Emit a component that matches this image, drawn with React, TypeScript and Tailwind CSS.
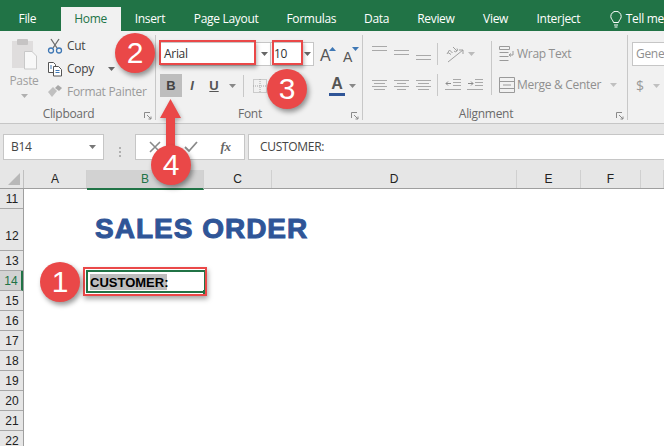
import React from "react";

const UI = "font-['Open_Sans','Noto_Sans',sans-serif] tracking-[-0.3px]";

const Chev = ({ c = "#7a7a7a", className = "" }: { c?: string; className?: string }) => (
  <svg width="7" height="4" viewBox="0 0 7 4" className={className}><path d="M0 0h7L3.5 4z" fill={c} /></svg>
);

const Launcher = () => (
  <svg width="8" height="8" viewBox="0 0 8 8" className="mr-[3px]" fill="none" stroke="#8a8a8a">
    <path d="M.5 6V.5H6" /><path d="M3 3l4 4M7 4.5V7H4.5" />
  </svg>
);

const Lines = ({ widths, gap = 4, c = "#a9a9a9" }: { widths: number[]; gap?: number; c?: string }) => (
  <svg width="15" height={(widths.length - 1) * gap + 1} fill="none" stroke={c}>
    {widths.map((w, i) => (
      <path key={i} d={`M${(15 - w) / 2} ${i * gap + 0.5}h${w}`} />
    ))}
  </svg>
);

const Tab = ({ w, label, active }: { w: string; label: string; active?: boolean }) => (
  <div className={`${w} h-[24px] flex items-center justify-center whitespace-nowrap ${active ? "bg-[#f1f1f1] text-[#217346]" : "text-white"}`}>
    {label}
  </div>
);

const Group = ({ w, label, children, sep = true }: { w: string; label: string; children: React.ReactNode; sep?: boolean }) => (
  <div className={`${w} shrink-0 mt-[4px] mb-[3px] flex flex-col ${sep ? "border-r border-[#c8c8c8]" : ""}`}>
    <div className="flex-1 min-h-0">{children}</div>
    <div className="h-[17px] flex items-end justify-end relative">
      <div className="absolute inset-0 flex items-center justify-center text-[12px] leading-none text-[#6a6a6a] pt-[5px] pr-[18px]">{label}</div>
      {sep && <Launcher />}
    </div>
  </div>
);

const Clipboard = () => (
  <Group w="w-[156px]" label="Clipboard">
    <div className="flex h-full pl-[9px] pt-[3px]">
      <div className="w-[30px] flex flex-col items-center">
        <svg width="27" height="33" viewBox="0 0 27 33">
          <rect x="1" y="3" width="21" height="27" fill="#dfdddd" />
          <rect x="6" y="1" width="11" height="6" rx="1" fill="#c6c4c4" />
          <path d="M13.5 13.5H21l4.5 4.500v13h-12z" fill="#f8f8f8" stroke="#c9c9c9" />
        </svg>
        <div className="text-[12px] leading-none text-[#a0a0a0] mt-[4px]">Paste</div>
        <Chev c="#b0b0b0" className="mt-[7px]" />
      </div>
      <div className="ml-[8px] flex flex-col gap-[3px] -mt-[2px]">
        <div className="h-[20px] flex items-center gap-[4px] text-[12px] text-[#444]">
          <svg width="16" height="16" viewBox="0 0 16 16" fill="none">
            <path d="M4 1l6 9M12 1L6 10" stroke="#6b6b6b" strokeWidth="1.3" />
            <circle cx="4" cy="12.500" r="2.500" stroke="#3f78b5" strokeWidth="1.3" />
            <circle cx="12" cy="12.500" r="2.500" stroke="#3f78b5" strokeWidth="1.3" />
          </svg>
          <span>Cut</span>
        </div>
        <div className="h-[20px] flex items-center gap-[4px] text-[12px] text-[#444]">
          <svg width="16" height="16" viewBox="0 0 16 16" fill="none" stroke="#555">
            <path d="M1.500 1.500h5l2 2v8h-7z" fill="#fff" />
            <path d="M6.500 5.500h5l3 3v6.500h-8z" fill="#fff" />
            <path d="M8.500 9.500h4M8.500 11.500h4M3 5h2M3 7h2" stroke="#3f78b5" />
          </svg>
          <span>Copy</span>
          <Chev c="#666" className="ml-[10px]" />
        </div>
        <div className="h-[20px] flex items-center gap-[4px] text-[12px] text-[#9a9a9a] whitespace-nowrap">
          <svg width="16" height="16" viewBox="0 0 16 16">
            <path d="M1 8l5-5 4 4-5 6z" fill="#c0c0c0" />
            <path d="M8 4l3-3 4 3-3 3z" fill="#a8a8a8" />
          </svg>
          <span>Format Painter</span>
        </div>
      </div>
    </div>
  </Group>
);

const ComboArrow = () => (
  <div className="flex-1 flex items-center justify-center"><Chev c="#666" /></div>
);

const Font = () => (
  <Group w="w-[207px]" label="Font">
    <div className="pl-[4px] pt-[7px]">
      <div className="flex items-center h-[24px]">
        <div className="w-[111px] h-[24px] bg-white border border-[#c6c6c6] flex text-[12px] text-[#333]">
          <div className="w-[97px] pl-[3px] flex items-center">Arial</div>
          <ComboArrow />
        </div>
        <div className="w-[43px] h-[24px] bg-white border border-l-0 border-[#c6c6c6] flex text-[12px] text-[#333]">
          <div className="w-[30px] pl-[3px] flex items-center">10</div>
          <ComboArrow />
        </div>
        <div className="ml-[6px] flex gap-[7px] font-['Liberation_Sans',sans-serif] text-[#555]">
          <div className="relative w-[16px] text-[16px] leading-none pt-[3px]">A<svg className="absolute right-0 top-[2px]" width="7" height="4"><path d="M0 4L3.500 0 7 4z" fill="#3f78b5" /></svg></div>
          <div className="relative w-[16px] text-[14px] leading-none pt-[5px]">A<svg className="absolute right-0 top-[2px]" width="7" height="4"><path d="M0 0h7L3.500 4z" fill="#3f78b5" /></svg></div>
        </div>
      </div>
      <div className="flex items-center h-[23px] mt-[8px] font-['Liberation_Sans',sans-serif] tracking-normal text-[13px] text-[#555]">
        <div className="w-[22px] h-[23px] bg-[#bdbdbd] flex items-center justify-center font-bold text-[#444]">B</div>
        <div className="w-[20px] text-center italic font-bold">I</div>
        <div className="w-[22px] ml-[1px] text-center font-bold underline">U</div>
        <Chev c="#888" className="ml-[4px]" />
        <div className="w-px h-[22px] bg-[#c8c8c8] ml-[7px]" />
        <svg width="14" height="14" className="ml-[9px]" fill="none" stroke="#a5a5a5" strokeDasharray="1 1"><rect x="0.500" y="0.500" width="13" height="13" /><path d="M7 0v14M0 7h14" /></svg>
        <div className="ml-[61px] w-[18px] flex flex-col items-center text-[16px] font-bold leading-none text-[#555]">A<div className="w-[16px] h-[3px] bg-[#2f5597] mt-[1px]" /></div>
        <Chev c="#888" className="ml-[3px]" />
      </div>
    </div>
  </Group>
);

const Alignment = () => (
  <Group w="w-[265px]" label="Alignment">
    <div className="flex pl-[9px] pt-[6px] text-[12px] text-[#8f8f8f] whitespace-nowrap">
      <div className="w-[119px] shrink-0 pt-[1px]">
        <div className="flex items-center h-[23px]">
          <div className="flex gap-[7px] h-[22px] w-[59px]">
            <div className="pt-[3px]"><Lines widths={[15, 15]} /></div>
            <div className="pt-[7px]"><Lines widths={[15, 15]} /></div>
            <div className="pt-[12px]"><Lines widths={[15, 15]} /></div>
          </div>
          <div className="w-px h-[22px] bg-[#c8c8c8] ml-[6px]" />
          <svg width="20" height="18" viewBox="0 0 20 18" className="ml-[7px]" fill="none" stroke="#9f9f9f">
            <path d="M3 17L18 5M18 5h-4M18 5v4" />
            <path d="M2 9l2.500-4 3 3M3 7.500l3 2M8 2l4 4M9 6a1.800 1.800 0 103-2.500" />
          </svg>
          <Chev c="#bbb" className="ml-[3px]" />
        </div>
        <div className="flex items-center h-[23px] mt-[8px]">
          <div className="flex gap-[7px] w-[59px]">
            <Lines widths={[15, 11, 15, 11]} gap={3} />
            <Lines widths={[15, 9, 15, 9]} gap={3} />
            <Lines widths={[15, 11, 15, 11]} gap={3} />
          </div>
          <div className="w-px h-[22px] bg-[#c8c8c8] ml-[6px]" />
          <div className="flex gap-[6px] ml-[7px]">
            <svg width="16" height="11" fill="none" stroke="#a9a9a9">
              <path d="M8 .5h8M8 3.500h8M8 6.500h8M0 10.500h16" />
              <path d="M6 4.500H1M3 2.500l-2 2 2 2" stroke="#8a8a8a" />
            </svg>
            <svg width="16" height="11" fill="none" stroke="#a9a9a9">
              <path d="M8 .5h8M8 3.500h8M8 6.500h8M0 10.500h16" />
              <path d="M1 4.500h5M4 2.500l2 2-2 2" stroke="#8a8a8a" />
            </svg>
          </div>
        </div>
      </div>
      <div className="w-px h-[54px] bg-[#c8c8c8]" />
      <div className="pl-[7px] pt-[1px]">
        <div className="flex items-center h-[23px]">
          <svg width="16" height="16" viewBox="0 0 16 16" fill="none" stroke="#9a9a9a">
            <path d="M.5.500h10v3H.5zM.5 6.500h9M.5 10.500h9M.5 14.500h9M14 5v4h-4M12 7.500l-2 1.500 2 1.500" />
          </svg>
          <span className="ml-[2px]">Wrap Text</span>
        </div>
        <div className="flex items-center h-[23px] mt-[8px]">
          <svg width="16" height="16" viewBox="0 0 16 16" fill="none" stroke="#9a9a9a">
            <path d="M.5.500h15v15H.5zM.5 4.500h15M.5 11.500h15M4 8h8" />
          </svg>
          <span className="ml-[2px]">Merge &amp; Center</span>
          <Chev c="#c0c0c0" className="ml-[9px]" />
        </div>
      </div>
    </div>
  </Group>
);

const NumberGroup = () => (
  <Group w="w-[37px]" label="" sep={false}>
    <div className="pl-[4px] pt-[7px]">
      <div className="h-[24px] bg-white border-y border-l border-[#c6c6c6] pl-[3px] flex items-center text-[12px] text-[#8f8f8f] overflow-hidden">Gener</div>
      <div className="flex items-center h-[23px] mt-[8px] text-[14px] text-[#9a9a9a] pl-[4px] gap-[9px]">
        $<Chev c="#c0c0c0" />
      </div>
    </div>
  </Group>
);

const columns = [
  { n: "A", w: "w-[63px]" },
  { n: "B", w: "w-[117px]", sel: true },
  { n: "C", w: "w-[68px]" },
  { n: "D", w: "w-[245px]" },
  { n: "E", w: "w-[64px]" },
  { n: "F", w: "w-[60px]" },
  { n: "", w: "w-[23px]" },
];

const rows = [
  { n: 11, h: "h-[20px] pb-[3px]" },
  { n: 12, h: "h-[42px] pb-[8px]" },
  { n: 13, h: "h-[20px] pb-[3px]" },
  { n: 14, h: "h-[20px] pb-[3px]", sel: true },
  ...[15, 16, 17, 18, 19, 20, 21, 22].map((n) => ({ n, h: "h-[20px] pb-[3px]" })),
];

const Callout = ({ n, pos }: { n: number; pos: string }) => (
  <div className={`absolute ${pos} w-[40px] h-[40px] rounded-full bg-[#ea4848] text-white flex items-center justify-center font-['Liberation_Sans',sans-serif] tracking-normal text-[30px] leading-none shadow-[2px_3px_5px_rgba(0,0,0,0.4)]`}>
    {n}
  </div>
);

export default function App() {
  return (
    <div className={`relative w-[664px] h-[446px] overflow-hidden bg-white ${UI}`}>
      {/* tab strip */}
      <div className="h-[31px] bg-[#217346] flex items-end text-[12px]">
        <Tab w="w-[55px]" label="File" />
        <div className="w-[6px]" />
        <Tab w="w-[60px]" label="Home" active />
        <Tab w="w-[59px]" label="Insert" />
        <Tab w="w-[94px]" label="Page Layout" />
        <Tab w="w-[77px]" label="Formulas" />
        <Tab w="w-[54px]" label="Data" />
        <Tab w="w-[65px]" label="Review" />
        <Tab w="w-[55px]" label="View" />
        <Tab w="w-[71px]" label="Interject" />
        <div className="h-[24px] flex items-center pl-[16px] text-white whitespace-nowrap">
          <svg width="12" height="17" viewBox="0 0 12 17" fill="none" stroke="#fff" className="mr-[4px]">
            <path d="M3.500 11.500C3 9 .8 8 .8 5.500a5.200 5.200 0 0110.400 0C11.200 8 9 9 8.500 11.500zM4 14h4M4.500 16h3" />
          </svg>
          Tell me
        </div>
      </div>

      {/* ribbon */}
      <div className="h-[93px] bg-[#f1f1f1] border-b border-[#c6c6c6] flex">
        <Clipboard />
        <Font />
        <Alignment />
        <NumberGroup />
      </div>

      {/* formula bar */}
      <div className="bg-[#e6e6e6] h-[46px] pt-[10px] pl-[3px] flex">
        <div className="w-[101px] h-[26px] bg-white border border-[#c6c6c6] flex items-center justify-between pl-[7px] pr-[7px] text-[12px] text-[#444]">
          B14<Chev c="#777" />
        </div>
        <div className="w-[31px] pl-[1px] flex items-center justify-center">
          <svg width="3" height="11"><path d="M0 0h2v2H0zM0 4h2v2H0zM0 8h2v2H0z" fill="#b0b0b0" /></svg>
        </div>
        <div className="w-[110px] h-[26px] bg-white border border-[#c6c6c6] flex items-center justify-around px-[2px]">
          <svg width="12" height="12" fill="none" stroke="#8a8a8a" strokeWidth="1.600"><path d="M1 1l10 10M11 1L1 11" /></svg>
          <svg width="14" height="12" fill="none" stroke="#8a8a8a" strokeWidth="1.800"><path d="M1 6l4 4 8-9" /></svg>
          <span className="font-['Liberation_Serif',serif] italic font-bold text-[13px] text-[#666]">fx</span>
        </div>
        <div className="flex-1 ml-[3px] h-[26px] bg-white border-y border-l border-[#c6c6c6] flex items-center pl-[11px] text-[12px] text-[#444]">CUSTOMER:</div>
      </div>

      {/* column headers */}
      <div className="flex h-[19px] bg-[#e6e6e6] border-b border-[#9f9f9f] font-['Liberation_Sans',sans-serif] tracking-normal text-[12px]">
        <div className="w-[24px] border-r border-[#c0c0c0] flex items-end justify-end p-[3px]">
          <svg width="12" height="12"><path d="M12 0v12H0z" fill="#b8b8b8" /></svg>
        </div>
        {columns.map((c) => (
          <div key={c.w + c.n} className={`${c.w} flex items-center justify-center border-r border-[#d0d0d0] ${c.sel ? "bg-[#d2d2d2] text-[#217346] border-b-2 border-b-[#217346] h-[20px]" : "text-[#222]"}`}>{c.n}</div>
        ))}
      </div>

      {/* row headers */}
      <div className="w-[24px] border-r border-[#9f9f9f] font-['Liberation_Sans',sans-serif] tracking-normal text-[12px] leading-none">
        {rows.map((r) => (
          <div key={r.n} className={`${r.h} flex items-end justify-center pl-[1px] border-b border-[#a8a8a8] ${r.sel ? "bg-[#d2d2d2] text-[#217346] border-r-2 border-r-[#217346]" : "bg-[#e6e6e6] text-[#222]"}`}>{r.n}</div>
        ))}
      </div>

      {/* sheet content */}
      <div className="absolute left-[95px] top-[213px] font-['Liberation_Sans',sans-serif] font-bold text-[28px] leading-[32px] tracking-[1px] text-[#2f5597] [-webkit-text-stroke:1px_#2f5597] whitespace-nowrap">SALES ORDER</div>

      {/* selected cell */}
      <div className="absolute left-[86px] top-[270px] w-[120px] h-[23px] border-2 border-[#217346]" />
      <div className="absolute left-[203px] top-[290px] w-[4px] h-[4px] bg-[#217346]" />
      <div className="absolute left-[90px] top-[274px] w-[77px] h-[16px] bg-[#bdbdbd] font-['Liberation_Sans',sans-serif] tracking-normal font-bold text-[13px] leading-[17px] text-black whitespace-nowrap">CUSTOMER:</div>
      <div className="absolute left-[83px] top-[267px] w-[124px] h-[29px] border-2 border-[#ea4848] shadow-[1px_3px_5px_rgba(0,0,0,0.35)]" />

      {/* annotation boxes */}
      <div className="absolute left-[159px] top-[40px] w-[97px] h-[25px] border-2 border-[#ea4848] shadow-[1px_3px_4px_rgba(0,0,0,0.3)]" />
      <div className="absolute left-[272px] top-[40px] w-[31px] h-[25px] border-2 border-[#ea4848] shadow-[1px_3px_4px_rgba(0,0,0,0.3)]" />

      {/* arrow */}
      <svg className="absolute left-[155px] top-[95px] drop-shadow-[1px_2px_2px_rgba(0,0,0,0.3)]" width="32" height="55" viewBox="0 0 32 55">
        <path d="M15.500 4L26 23h-6v32h-9V23H5z" fill="#ea4848" />
      </svg>

      <Callout n={1} pos="left-[40px] top-[262px]" />
      <Callout n={2} pos="left-[115px] top-[33px]" />
      <Callout n={3} pos="left-[267px] top-[69px]" />
      <Callout n={4} pos="left-[151px] top-[145px]" />
    </div>
  );
}
